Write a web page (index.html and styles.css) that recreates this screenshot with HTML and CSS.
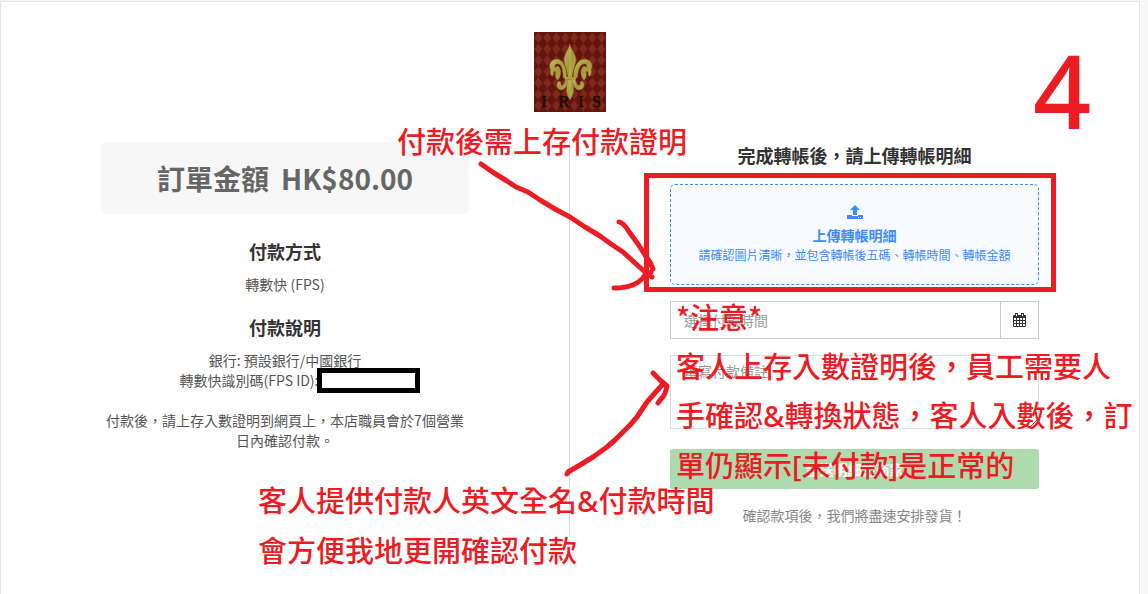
FILE: index.html
```html
<!DOCTYPE html>
<html lang="zh-Hant">
<head>
    <meta charset="UTF-8">
    <meta name="viewport" content="width=device-width, initial-scale=1.0">
    <title>上傳轉帳明細</title>
    <link rel="stylesheet" href="styles.css">
</head>
<body>
    <main class="page">
        <header class="header">
            <svg class="logo" viewBox="0 0 216 240" role="img" aria-label="IRIS">
                <defs>
                    <pattern id="diamonds" width="27" height="34" patternUnits="userSpaceOnUse">
                        <rect width="27" height="34" fill="#64140d"/>
                        <path d="M13 1L25 17 13 33 1 17z" fill="#7d2a1c"/>
                    </pattern>
                    <linearGradient id="gold" x1="0" x2="1" y1="0" y2="1">
                        <stop offset="0" stop-color="#c4b95c"/>
                        <stop offset="0.5" stop-color="#a3983c"/>
                        <stop offset="1" stop-color="#b8ac4c"/>
                    </linearGradient>
                </defs>
                <rect width="216" height="240" fill="url(#diamonds)"/>
                <g fill="url(#gold)" stroke="#a59a40" stroke-width="1">
                    <path d="M107 36C104 55 90 66 91 84C92 102 101 115 102 136H114C115 115 124 102 125 84C126 66 111 55 107 36Z"/>
                    <path d="M97 137C98 111 90 83 69 82C50 82 42 99 50 113C48 121 49 129 55 133C60 128 57 121 60 117L66 120C62 128 64 139 71 144C80 136 82 119 77 108C73 100 66 102 64 108C60 101 64 94 71 95C86 97 87 119 88 137Z"/>
                    <path d="M119 137C118 111 128 83 151 82C170 82 179 99 171 113C173 121 172 129 166 133C161 128 164 121 161 117L155 120C159 128 157 139 150 144C141 136 139 119 144 108C148 100 155 102 157 108C161 101 157 94 150 95C135 97 132 119 130 137Z"/>
                    <rect x="92" y="135" width="34" height="8" rx="3"/>
                    <path d="M101 143H116C117 164 124 180 108 203C92 180 100 164 101 143Z"/>
                    <path d="M103 143C98 155 98 168 86 173C72 177 64 160 72 150C76 146 82 149 80 155C82 166 93 158 94 143Z"/>
                    <path d="M114 143C119 155 119 168 131 173C146 177 155 160 147 150C143 146 137 149 139 155C137 166 125 158 124 143Z"/>
                </g>
                <path d="M108 50V132M108 148V190" stroke="#d8cf7a" stroke-width="3" opacity="0.5"/>
                <text class="logo-text" x="22 73 133 174" y="226">IRIS</text>
            </svg>
        </header>

        <div class="columns">
            <section class="column column-info">
                <div class="amount">
                    <span>訂單金額</span>
                    <span>HK$80.00</span>
                </div>
                <h2 class="title">付款方式</h2>
                <p class="text">轉數快 (FPS)</p>
                <h2 class="title">付款說明</h2>
                <p class="text">銀行: 預設銀行/中國銀行<br>轉數快識別碼(FPS ID):<span class="account"><span class="mask"></span></span></p>
                <p class="text">付款後，請上存入數證明到網頁上，本店職員會於7個營業日內確認付款。</p>
            </section>

            <section class="column">
                <h2 class="title upload-title">完成轉帳後，請上傳轉帳明細</h2>
                <form class="form">
                    <button type="button" class="upload">
                        <svg class="upload-icon" viewBox="0 0 16 14" aria-hidden="true">
                            <path d="M8 0L13 5H10V10H6V5H3z"/>
                            <path d="M0 10H5V11H11V10H16V14H0zM11 12V13H12V12zM13 12V13H14V12z" fill-rule="evenodd"/>
                        </svg>
                        <strong>上傳轉帳明細</strong>
                        <small>請確認圖片清晰，並包含轉帳後五碼、轉帳時間、轉帳金額</small>
                    </button>
                    <div class="date-group">
                        <input type="text" class="field" placeholder="選擇付款時間" aria-label="選擇付款時間">
                        <button type="button" class="date-button" aria-label="選擇付款時間">
                            <svg class="calendar-icon" viewBox="0 0 14 15" aria-hidden="true">
                                <rect x="0" y="2" width="13" height="12" rx="1" fill="#333"/>
                                <path d="M1 5H3V7H1zM4 5H6V7H4zM7 5H9V7H7zM10 5H12V7H10zM1 8H3V10H1zM4 8H6V10H4zM7 8H9V10H7zM10 8H12V10H10zM1 11H3V13H1zM4 11H6V13H4zM7 11H9V13H7zM10 11H12V13H10z" fill="#fff"/>
                                <path d="M2 0H5V4H2zM8 0H11V4H8z" fill="#333"/>
                                <path d="M3 1H4V3H3zM9 1H10V3H9z" fill="#fff"/>
                            </svg>
                        </button>
                    </div>
                    <textarea class="field memo" placeholder="填寫付款備註" aria-label="填寫付款備註"></textarea>
                    <button type="submit" class="submit">發送明細給商家</button>
                </form>
                <p class="footnote">確認款項後，我們將盡速安排發貨！</p>
            </section>
        </div>

        <!-- red notes for staff, drawn over the page -->
        <svg class="arrows" viewBox="0 0 700 500" aria-hidden="true">
            <path d="M481 164L494 173 507 181 516 187 528 192 540 200 555 209 570 217 585 227 600 236 611 244 623 252 635 263 645 272 652 277"/>
            <path d="M619 222Q623 222 630 233L638 244 645 255 650 262 653 269"/>
            <path d="M614 288Q637 288 645 275L651 272"/>
            <path d="M567 474L568 472 580 465 593 457 607 447 615 440 623 432 630 425 637 417 647 402 654 394 663 384"/>
            <path d="M653 373L660 380 667 386Q665 396 661 399L658 403"/>
        </svg>
        <div class="highlight"></div>
        <p class="remark remark-proof">付款後需上存付款證明</p>
        <p class="remark remark-notice">*注意*<br>客人上存入數證明後，員工需要人<br>手確認<span class="latin">&amp;</span>轉換狀態，客人入數後，訂<br>單仍顯示<span class="latin">[</span>未付款<span class="latin">]</span>是正常的</p>
        <p class="remark remark-name">客人提供付款人英文全名<span class="latin">&amp;</span>付款時間<br>會方便我地更開確認付款</p>
        <p class="step">4</p>
    </main>
</body>
</html>
```
FILE: styles.css
```css
* {
    box-sizing: border-box;
}
body {
    display: flex;
    min-height: 100vh;
    margin: 0;
    padding: 1px 8px 0 0;
    background-color: #f7f7f7;
    color: #555;
    font-family: 'Noto Sans CJK TC', sans-serif;
    font-size: 14px;
    line-height: 20px;
}
h2, p {
    margin: 0;
}
button, input, textarea {
    font-family: inherit;
    font-size: 14px;
    line-height: 20px;
}
.page {
    position: relative;
    flex: 1;
    background-color: #fff;
    border: 1px solid #e5e5e5;
    border-bottom: none;
}
.header {
    display: flex;
    justify-content: center;
    padding: 30px 0;
}
.logo {
    width: 72px;
    height: 80px;
}
.logo-text {
    fill: #1c0806;
    stroke: #1c0806;
    font-family: 'Liberation Serif', serif;
    font-size: 50px;
}
.columns {
    display: grid;
    grid-template-columns: 1fr 1fr;
}
.column {
    padding: 0 100px 12px;
    text-align: center;
}
.column-info {
    border-right: 1px solid #ddd;
}
.amount {
    display: flex;
    justify-content: center;
    gap: 12px;
    margin-bottom: 28px;
    padding: 16px;
    border-radius: 6px;
    background-color: #f7f7f7;
    color: #666;
    font-size: 28px;
    font-weight: bold;
    line-height: 40px;
}
.title {
    margin-bottom: 14px;
    color: #333;
    font-size: 18px;
    line-height: 18px;
}
.text {
    margin-bottom: 24px;
}
.text + .text {
    margin-top: -4px;
}
.account {
    position: relative;
    display: inline-block;
    width: 72px;
    height: 14px;
}
.mask {
    position: absolute;
    top: -4px;
    left: -2px;
    width: 103px;
    height: 25px;
    border: 5px solid #000;
    background-color: #fff;
}
.upload-title {
    padding-top: 4px;
    margin-bottom: 20px;
}
.form {
    display: flex;
    flex-direction: column;
    gap: 16px;
}
.upload {
    display: flex;
    flex-direction: column;
    align-items: center;
    padding: 20px 12px 19px;
    border: 1px dashed #3b8cff;
    border-radius: 5px;
    background-color: #f7faff;
    color: #3b8cff;
    cursor: pointer;
}
.upload-icon {
    width: 16px;
    height: 14px;
    margin-bottom: 6px;
    fill: #3b8cff;
}
.upload small {
    font-size: 12px;
}
.date-group {
    display: flex;
}
.field {
    flex: 1;
    min-width: 0;
    padding: 8px 13px;
    border: 1px solid #ccc;
    border-radius: 0;
    background-color: #fff;
    color: #555;
}
.field::placeholder {
    color: #999;
}
.date-button {
    width: 38px;
    border: 1px solid #ccc;
    border-left: none;
    background-color: #fff;
    cursor: pointer;
}
.calendar-icon {
    display: block;
    width: 14px;
    height: 15px;
    margin: auto;
}
.memo {
    flex: none;
    height: 74px;
    padding-top: 5px;
    border-color: #ddd;
}
.submit {
    margin-top: 4px;
    padding: 10px;
    border: none;
    border-radius: 3px;
    background-color: #addbad;
    color: #fff;
    font-weight: bold;
}
.footnote {
    padding-top: 16px;
    color: #888;
}
.arrows {
    position: absolute;
    top: -2px;
    left: -1px;
    width: 700px;
    height: 500px;
    fill: none;
    stroke: #ed1c24;
    stroke-width: 5;
    stroke-linecap: round;
    stroke-linejoin: round;
    pointer-events: none;
}
.highlight {
    position: absolute;
    top: 171px;
    left: 643px;
    width: 412px;
    height: 119px;
    border: 5px solid #ed1c24;
    pointer-events: none;
}
.remark {
    position: absolute;
    color: #ed1c24;
    font-size: 29px;
    font-weight: 500;
    line-height: 49px;
    white-space: nowrap;
    pointer-events: none;
}
.latin {
    font-family: 'Noto Sans', sans-serif;
}
.remark-proof {
    top: 114px;
    left: 396px;
}
.remark-notice {
    top: 290px;
    left: 675px;
}
.remark-name {
    top: 473px;
    left: 257px;
}
.step {
    position: absolute;
    top: 28px;
    left: 1032px;
    color: #ed1c24;
    font-family: 'Noto Sans', sans-serif;
    font-size: 102px;
    font-weight: 500;
    line-height: 120px;
}
```
